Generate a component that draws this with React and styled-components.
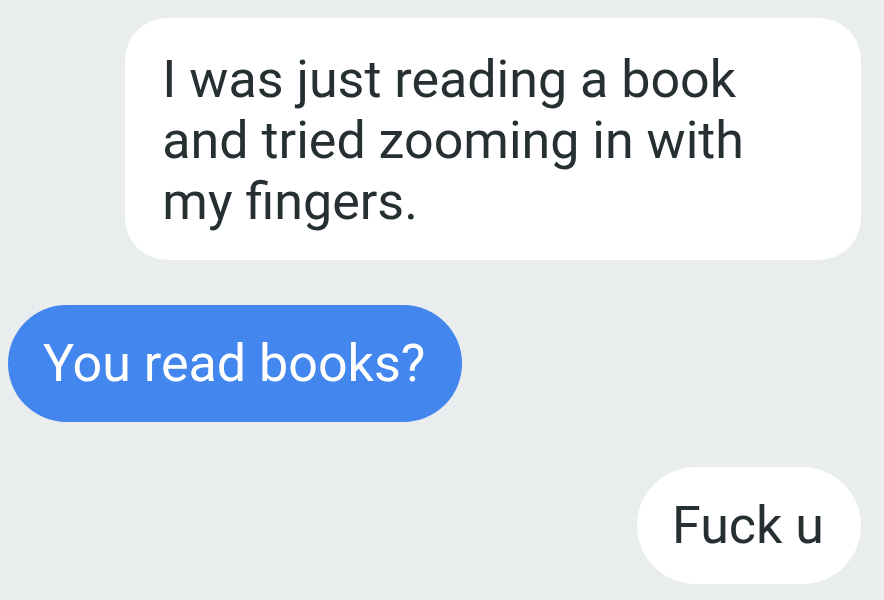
import React from "react";
import styled, { createGlobalStyle } from "styled-components";

const GlobalStyle = createGlobalStyle`
  html, body {
    margin: 0;
    padding: 0;
    background: #e9edee;
  }
  body {
    font-family: Roboto, "Noto Sans", "Liberation Sans", sans-serif;
  }
`;

const Thread = styled.div`
  box-sizing: border-box;
  display: flex;
  flex-direction: column;
  gap: 45px;
  width: 884px;
  height: 600px;
  padding: 18px 23px 0 8px;
  overflow: hidden;
`;

const Bubble = styled.div`
  box-sizing: border-box;
  align-self: ${({ outgoing }) => (outgoing ? "flex-end" : "flex-start")};
  max-width: 740px;
  padding: ${({ multiline }) =>
    multiline ? "31px 117px 28px 37px" : "28px 37px 27px 35px"};
  border-radius: ${({ multiline }) => (multiline ? "42px" : "59px")};
  background: ${({ outgoing }) => (outgoing ? "#ffffff" : "#4286ee")};
  color: ${({ outgoing }) => (outgoing ? "#263033" : "#ffffff")};
  font-size: 52px;
  line-height: ${({ multiline }) => (multiline ? "61px" : "62px")};
  font-weight: 400;
  white-space: pre-line;
`;

const messages = [
  {
    id: 1,
    outgoing: true,
    multiline: true,
    text: "I was just reading a book\nand tried zooming in with\nmy fingers."
  },
  { id: 2, outgoing: false, text: "You read books?" },
  { id: 3, outgoing: true, text: "Fuck u" }
];

const App = () => (
  <>
    <GlobalStyle />
    <Thread>
      {messages.map(m => (
        <Bubble key={m.id} outgoing={m.outgoing} multiline={m.multiline}>
          {m.text}
        </Bubble>
      ))}
    </Thread>
  </>
);

export default App;
